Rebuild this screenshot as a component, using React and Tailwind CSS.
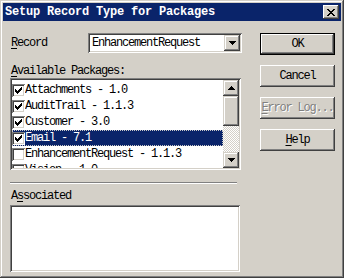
import React from 'react'

const mono = "font-['Liberation_Mono',monospace] text-[12px] leading-[12px] tracking-[-1.2px]"
const raised = 'shadow-[inset_-1px_-1px_#404040,inset_1px_1px_#ffffff,inset_-2px_-2px_#808080,inset_2px_2px_#d4d0c8]'
const raisedScroll = 'shadow-[inset_-1px_-1px_#404040,inset_1px_1px_#d4d0c8,inset_-2px_-2px_#808080,inset_2px_2px_#ffffff]'
const sunken = 'shadow-[inset_1px_1px_#808080,inset_-1px_-1px_#ffffff,inset_2px_2px_#404040,inset_-2px_-2px_#d4d0c8]'

const ArrowDown = () => (
  <svg width="7" height="4" viewBox="0 0 7 4" shapeRendering="crispEdges">
    <path d="M0 0h7v1H0zM1 1h5v1H1zM2 2h3v1H2zM3 3h1v1H3z" fill="#000" />
  </svg>
)

const ArrowUp = () => (
  <svg width="7" height="4" viewBox="0 0 7 4" shapeRendering="crispEdges">
    <path d="M3 0h1v1H3zM2 1h3v1H2zM1 2h5v1H1zM0 3h7v1H0z" fill="#000" />
  </svg>
)

const Check = () => (
  <svg width="13" height="13" viewBox="0 0 13 13" shapeRendering="crispEdges" className="absolute inset-0">
    <path d="M3 5h1v3H3zM4 6h1v3H4zM5 7h1v3H5zM6 6h1v3H6zM7 5h1v3H7zM8 4h1v3H8zM9 3h1v3H9z" fill="#000" />
  </svg>
)

const packages = [
  { name: 'Attachments - 1.0', checked: true },
  { name: 'AuditTrail - 1.1.3', checked: true },
  { name: 'Customer - 3.0', checked: true },
  { name: 'Email - 7.1', checked: true, selected: true },
  { name: 'EnhancementRequest - 1.1.3', checked: false },
  { name: 'Vision - 1.0', checked: false },
]

const Btn = ({ children, isDefault, disabled }) => (
  <div
    className={`w-[75px] h-[22px] flex items-center justify-center ${raised} ${
      isDefault ? 'border border-black' : ''
    } ${disabled ? 'text-[#808080] [text-shadow:1px_1px_0_#ffffff]' : 'text-black'} ${mono}`}
  >
    {children}
  </div>
)

export default function App() {
  return (
    <div
      className={`w-[344px] h-[278px] bg-[#d4d0c8] p-[3px] overflow-hidden shadow-[inset_-1px_-1px_#404040,inset_1px_1px_#d4d0c8,inset_-2px_-2px_#808080,inset_2px_2px_#ffffff] ${mono}`}
    >
      {/* title bar */}
      <div className="h-[18px] bg-[#0a246a] flex items-center justify-between pl-[2px] pr-[2px]">
        <span className="text-white font-bold font-['Liberation_Mono',monospace] text-[12px] tracking-[-0.2px]">
          Setup Record Type for Packages
        </span>
        <div className={`w-[16px] h-[14px] bg-[#d4d0c8] ${raised} flex items-center justify-center`}>
          <svg width="8" height="7" viewBox="0 0 8 7" shapeRendering="crispEdges">
            <path
              d="M0 0h2v1H0zM6 0h2v1H6zM1 1h2v1H1zM5 1h2v1H5zM2 2h4v1H2zM3 3h2v1H3zM2 4h4v1H2zM1 5h2v1H1zM5 5h2v1H5zM0 6h2v1H0zM6 6h2v1H6z"
              fill="#000"
            />
          </svg>
        </div>
      </div>

      <div className="flex pl-[7px] pt-[12px]">
        {/* left column */}
        <div className="w-[232px] flex flex-col">
          <div className="flex items-center h-[20px]">
            <div className="w-[78px] pl-[1px]">
              <span className="underline underline-offset-[2px]">R</span>ecord
            </div>
            <div className={`w-[154px] h-[20px] bg-white ${sunken} flex items-center justify-between p-[2px]`}>
              <span className="pl-[2px]">EnhancementRequest</span>
              <div className={`w-[16px] h-[16px] bg-[#d4d0c8] ${raisedScroll} flex items-center justify-center`}>
                <ArrowDown />
              </div>
            </div>
          </div>

          <div className="mt-[12px] pl-[1px]">
            <span className="underline underline-offset-[2px]">A</span>vailable Packages:
          </div>

          <div className={`mt-[1px] w-[231px] h-[92px] bg-white ${sunken} p-[2px] flex`}>
            <div className="flex-1 pt-[2px] overflow-hidden">
              {packages.map((p) => (
                <div
                  key={p.name}
                  className={`h-[16px] flex items-center whitespace-nowrap ${
                    p.selected ? 'bg-[#0a246a] text-white outline outline-1 outline-dotted outline-offset-[-1px] outline-[#c8c8c8]' : 'text-black'
                  }`}
                >
                  <div className={`relative w-[13px] h-[13px] shrink-0 bg-white ${sunken}`}>{p.checked && <Check />}</div>
                  <span>{p.name}</span>
                </div>
              ))}
            </div>
            <div className="w-[16px] flex flex-col">
              <div className={`h-[16px] bg-[#d4d0c8] ${raisedScroll} flex items-center justify-center`}>
                <ArrowUp />
              </div>
              <div className={`h-[30px] bg-[#d4d0c8] ${raisedScroll}`} />
              <div className="flex-1 bg-[repeating-conic-gradient(#d4d0c8_0%_25%,#ffffff_0%_50%)] bg-[length:2px_2px]" />
              <div className={`h-[16px] bg-[#d4d0c8] ${raisedScroll} flex items-center justify-center`}>
                <ArrowDown />
              </div>
            </div>
          </div>

          <div className="mt-[12px] w-[227px] h-[2px] border-t border-t-[#808080] border-b border-b-white" />

          <div className="mt-[6px] pl-[1px]">
            A<span className="underline underline-offset-[2px]">s</span>sociated
          </div>

          <div className={`mt-[3px] w-[230px] h-[67px] bg-white ${sunken}`} />
        </div>

        {/* right column */}
        <div className="ml-[18px] flex flex-col gap-[10px]">
          <Btn isDefault>OK</Btn>
          <Btn>Cancel</Btn>
          <Btn disabled>
            <span>
              <span className="underline underline-offset-[2px]">E</span>rror Log...
            </span>
          </Btn>
          <Btn>
            <span>
              <span className="underline underline-offset-[2px]">H</span>elp
            </span>
          </Btn>
        </div>
      </div>
    </div>
  )
}
